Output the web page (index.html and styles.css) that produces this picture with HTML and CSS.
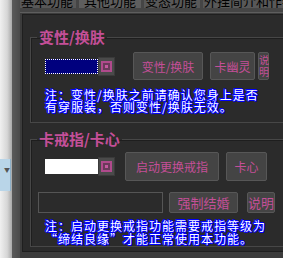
FILE: index.html
```html
<!DOCTYPE html>
<html lang="zh-CN">
<head>
    <meta charset="UTF-8">
    <title>其他功能</title>
    <link rel="stylesheet" href="styles.css">
</head>
<body>
    <div class="strip">
        <div class="combo"><span class="combo-arrow">&#9660;</span></div>
    </div>
    <div class="edge"></div>
    <div class="main">
        <nav class="tabs">
            <span class="tab">基本功能</span>
            <span class="tab active">其他功能</span>
            <span class="tab">变态功能</span>
            <span class="tab">外挂简介和作者</span>
        </nav>
        <div class="panel">
            <div class="inner">
                <fieldset class="group">
                    <legend>变性/换肤</legend>
                    <div class="row row-top">
                        <div class="picker">
                            <span class="swatch navy"></span>
                            <span class="pick-btn"><i></i></span>
                        </div>
                        <button class="btn btn-skin">变性/换肤</button>
                        <button class="btn btn-ghost">卡幽灵</button>
                        <button class="btn btn-tall">说<br>明</button>
                    </div>
                    <p class="note">注：变性/换肤之前请确认您身上是否<br>有穿服装，否则变性/换肤无效。</p>
                </fieldset>

                <fieldset class="group group-ring">
                    <legend>卡戒指/卡心</legend>
                    <div class="row row-ring">
                        <div class="picker">
                            <span class="swatch white"></span>
                            <span class="pick-btn"><i></i></span>
                        </div>
                        <button class="btn btn-ring">启动更换戒指</button>
                        <button class="btn btn-heart">卡心</button>
                    </div>
                    <div class="row row-marry">
                        <input class="name-box" type="text">
                        <button class="btn btn-marry">强制结婚</button>
                        <button class="btn btn-help">说明</button>
                    </div>
                    <p class="note note-ring">注：启动更换戒指功能需要戒指等级为<br>“缔结良缘”才能正常使用本功能。</p>
                </fieldset>
            </div>
        </div>
    </div>
</body>
</html>
```

FILE: styles.css
```css
body {
    margin: 0;
    height: 258px;
    overflow: hidden;
    display: flex;
    background-color: #3a3a3a;
    font-family: "Noto Sans CJK SC", "Noto Sans", sans-serif;
}
.strip {
    width: 12px;
    flex: none;
    background: linear-gradient(to right, #f0f0f0, #d6d6d6 60%, #a8a8a8);
}
.combo {
    margin-top: 159px;
    height: 32px;
    width: 10px;
    background-color: #b9d5e8;
    border-right: 1px solid #8fb0c8;
    position: relative;
}
.combo-arrow {
    position: absolute;
    top: 6px;
    right: 0;
    font-size: 6px;
    color: #555;
}
.edge {
    width: 8px;
    flex: none;
    background: linear-gradient(to right, #5a5a5a, #4a4a4a);
}
.main {
    flex: 1;
    min-width: 0;
    display: flex;
    flex-direction: column;
}
.tabs {
    display: flex;
    gap: 3px;
    height: 13px;
    background-color: #454545;
    overflow: hidden;
    white-space: nowrap;
}
.tab {
    margin-top: -6px;
    height: 14px;
    padding: 0 3px 0 1px;
    font-size: 13px;
    line-height: 14px;
    color: #000;
    background-color: #585858;
}
.tab.active {
    padding: 0 5px;
    background-color: #5e5e5e;
}
.panel {
    flex: 1;
    border-top: 1px solid #5e5e5e;
    padding: 1px 0 6px 2px;
    background-color: #3c3c3c;
}
.inner {
    height: 236px;
    background-color: #2b2b2b;
    border: 1px solid #1f1f1f;
    border-right: none;
    overflow: hidden;
}
.group {
    margin: 14px -20px 0 7px;
    padding: 0;
    border: 1px solid #474747;
    box-shadow: inset 1px 1px 0 #1e1e1e;
}
.group legend {
    margin-left: 6px;
    padding: 0 2px;
    font-size: 15px;
    font-weight: bold;
    line-height: 16px;
    color: #c44f98;
}
.row {
    display: flex;
    align-items: center;
}
.row-top {
    margin-top: 7px;
    padding-left: 14px;
}
.picker {
    display: flex;
    align-items: center;
}
.swatch {
    width: 51px;
    height: 13px;
    border: 1px dotted #fff;
}
.swatch.navy {
    background-color: #00007e;
}
.swatch.white {
    background-color: #fff;
    border-style: solid;
}
.pick-btn {
    width: 15px;
    height: 17px;
    display: flex;
    align-items: center;
    justify-content: center;
    background-color: #4a4a4a;
    border: 1px solid #3a3a3a;
}
.pick-btn i {
    width: 7px;
    height: 7px;
    border: 2px solid #b04a8c;
    background: radial-gradient(#c45aa0 30%, #6a3a5a 35%);
}
.btn {
    height: 28px;
    padding: 0;
    font-family: inherit;
    font-size: 12px;
    color: #c44f98;
    background-color: #444;
    border: 1px solid #575757;
    border-radius: 2px;
}
.btn-skin {
    margin-left: 18px;
    width: 70px;
}
.btn-ghost {
    margin-left: 7px;
    width: 45px;
}
.btn-tall {
    margin-left: 3px;
    width: 11px;
    font-size: 10px;
    line-height: 12px;
}
.note {
    margin: 9px 0 0 14px;
    font-size: 12px;
    letter-spacing: 1px;
    line-height: 12px;
    color: #fff;
    white-space: nowrap;
    text-shadow: 1px 0 #00f, -1px 0 #00f, 0 1px #00f, 0 -1px #00f, 1px 1px #00f, -1px -1px #00f;
}
.group:first-child .note {
    padding-bottom: 9px;
}
.group-ring {
    margin-top: 8px;
}
.row-ring {
    margin-top: 5px;
    padding-left: 14px;
}
.btn-ring {
    margin-left: 10px;
    width: 94px;
    height: 29px;
}
.btn-heart {
    margin-left: 7px;
    width: 41px;
    height: 29px;
}
.row-marry {
    margin-top: 11px;
    padding-left: 7px;
}
.name-box {
    width: 123px;
    height: 19px;
    padding: 0;
    background-color: #2b2b2b;
    border: 1px solid #555;
}
.btn-marry {
    margin-left: 6px;
    width: 69px;
    height: 21px;
    font-size: 13px;
}
.btn-help {
    margin-left: 9px;
    width: 28px;
    height: 21px;
    font-size: 13px;
}
.note-ring {
    margin-top: 6px;
    line-height: 13px;
    padding-bottom: 1px;
}
```
